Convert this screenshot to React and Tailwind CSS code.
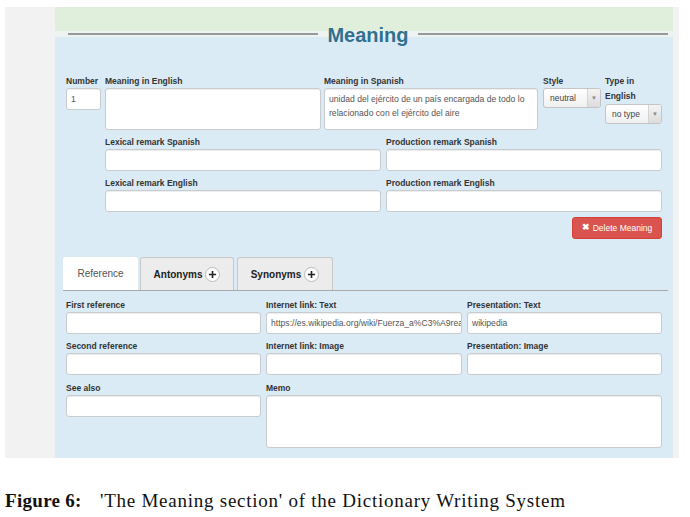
import React from 'react';

const inputCls = 'bg-white border border-[#c9ccce] rounded-[3px] shadow-[inset_0_1px_1px_rgba(0,0,0,0.075)]';

function Label({ children, className = '' }) {
  return (
    <div className={`text-[8.5px] leading-[14px] font-bold text-[#333] whitespace-nowrap ${className}`}>{children}</div>
  );
}

function Field({ label, w, h = 22, value, className = '' }) {
  return (
    <div className={`flex flex-col ${className}`} style={{ width: w }}>
      <Label>{label}</Label>
      <div className={`${inputCls} px-[4px] text-[8.6px] leading-[20px] text-[#555] overflow-hidden whitespace-nowrap`} style={{ height: h }}>
        {value}
      </div>
    </div>
  );
}

function Select({ value, w, h = 20 }) {
  return (
    <div className="flex border border-[#c4c4c4] rounded-[3px] bg-gradient-to-b from-white to-[#f0f0f0] overflow-hidden" style={{ width: w, height: h }}>
      <div className="flex-1 text-[8.5px] text-[#444] flex items-center pl-[6px]">{value}</div>
      <div className="w-[13px] border-l border-[#d4d4d4] bg-gradient-to-b from-[#f4f4f4] to-[#dcdcdc] flex items-center justify-center text-[6px] text-[#888]">▼</div>
    </div>
  );
}

function PlusBadge() {
  return (
    <span className="ml-[3px] inline-flex items-center justify-center w-[15px] h-[15px] rounded-full bg-white border border-[#bbb]">
      <svg width="9" height="9" viewBox="0 0 10 10">
        <path d="M5 1v8M1 5h8" stroke="#222" strokeWidth="1.8" />
      </svg>
    </span>
  );
}

export default function App() {
  return (
    <div className="w-[690px] h-[517px] bg-white pt-[7px] pl-[5px] font-['Liberation_Sans',Arial,sans-serif]">
      <div className="w-[674px] h-[451px] bg-[#f2f2f2] pl-[50px]">
        <div className="w-[618px] h-full bg-[#dbebf6] flex flex-col">
          {/* top band */}
          <div className="h-[24px] bg-[#e0efdb] shrink-0" />
          <div className="h-[6px] bg-[#edf3f1] shrink-0" />
          {/* legend */}
          <div className="-mt-[13px] h-[20px] flex items-center pl-[13px] pr-[5px] shrink-0">
            <div className="flex-1 h-[2px] bg-[#999]" />
            <div className="px-[9px] text-[20px] leading-[20px] font-bold text-[#31708f] translate-y-[1px]">Meaning</div>
            <div className="flex-1 h-[2px] bg-[#999]" />
          </div>

          {/* row 1 */}
          <div className="mt-[30px] pl-[11px] flex items-start">
            <Field label="Number" w={35} value="1" />
            <Field label="Meaning in English" w={216} h={42} className="ml-[4px]" />
            <div className="ml-[3px] flex flex-col w-[214px]">
              <Label>Meaning in Spanish</Label>
              <div className={`${inputCls} h-[42px] px-[4px] pt-[3px] text-[8.6px] leading-[14px] text-[#555]`}>
                unidad del ejército de un país encargada de todo lo relacionado con el ejército del aire
              </div>
            </div>
            <div className="ml-[5px] flex flex-col w-[58px]">
              <Label>Style</Label>
              <Select value="neutral" w={58} />
            </div>
            <div className="ml-[4px] flex flex-col w-[57px]">
              <Label>Type in</Label>
              <Label className="mt-[1px]">English</Label>
              <div className="mt-[1px]">
                <Select value="no type" w={57} />
              </div>
            </div>
          </div>

          {/* remarks */}
          <div className="mt-[5px] pl-[50px] flex gap-[5px]">
            <Field label="Lexical remark Spanish" w={276} />
            <Field label="Production remark Spanish" w={276} />
          </div>
          <div className="mt-[5px] pl-[50px] flex gap-[5px]">
            <Field label="Lexical remark English" w={276} />
            <Field label="Production remark English" w={276} />
          </div>

          <div className="mt-[5px] pr-[11px] flex justify-end">
            <div className="w-[90px] h-[22px] rounded-[3px] bg-[#d9534f] border border-[#d43f3a] text-white text-[8.5px] flex items-center justify-center gap-[3px]">
              <span className="text-[9px] font-bold">✖</span>
              <span>Delete Meaning</span>
            </div>
          </div>

          {/* tabs */}
          <div className="mt-[18px] ml-[8px] mr-[5px] flex items-end border-b border-[#aaa] h-[34px]">
            <div className="w-[75px] h-[33px] bg-white rounded-t-[3px] flex items-center justify-center text-[10px] text-[#555]">Reference</div>
            <div className="ml-[2px] w-[94px] h-[33px] bg-[#ececec] border border-b-0 border-[#c8c8c8] rounded-t-[3px] flex items-center justify-center text-[10px] font-bold text-[#222]">
              Antonyms<PlusBadge />
            </div>
            <div className="ml-[3px] w-[96px] h-[33px] bg-[#ececec] border border-b-0 border-[#c8c8c8] rounded-t-[3px] flex items-center justify-center text-[10px] font-bold text-[#222]">
              Synonyms<PlusBadge />
            </div>
          </div>

          {/* reference */}
          <div className="mt-[7px] pl-[11px] flex gap-[5px]">
            <Field label="First reference" w={195} />
            <Field label="Internet link: Text" w={196} value="https://es.wikipedia.org/wiki/Fuerza_a%C3%A9rea" />
            <Field label="Presentation: Text" w={195} value="wikipedia" />
          </div>
          <div className="mt-[5px] pl-[11px] flex gap-[5px]">
            <Field label="Second reference" w={195} />
            <Field label="Internet link: Image" w={196} />
            <Field label="Presentation: Image" w={195} />
          </div>
          <div className="mt-[6px] pl-[11px] flex gap-[5px] items-start">
            <Field label="See also" w={195} />
            <Field label="Memo" w={396} h={53} />
          </div>
        </div>
      </div>

      <div className="mt-[29px] flex items-baseline font-['Liberation_Serif','Times_New_Roman',serif] text-[19px] tracking-[0.75px] text-[#111]">
        <span className="font-bold w-[95px] tracking-[0.3px]">Figure 6:</span>
        <span>'The Meaning section' of the Dictionary Writing System</span>
      </div>
    </div>
  );
}
